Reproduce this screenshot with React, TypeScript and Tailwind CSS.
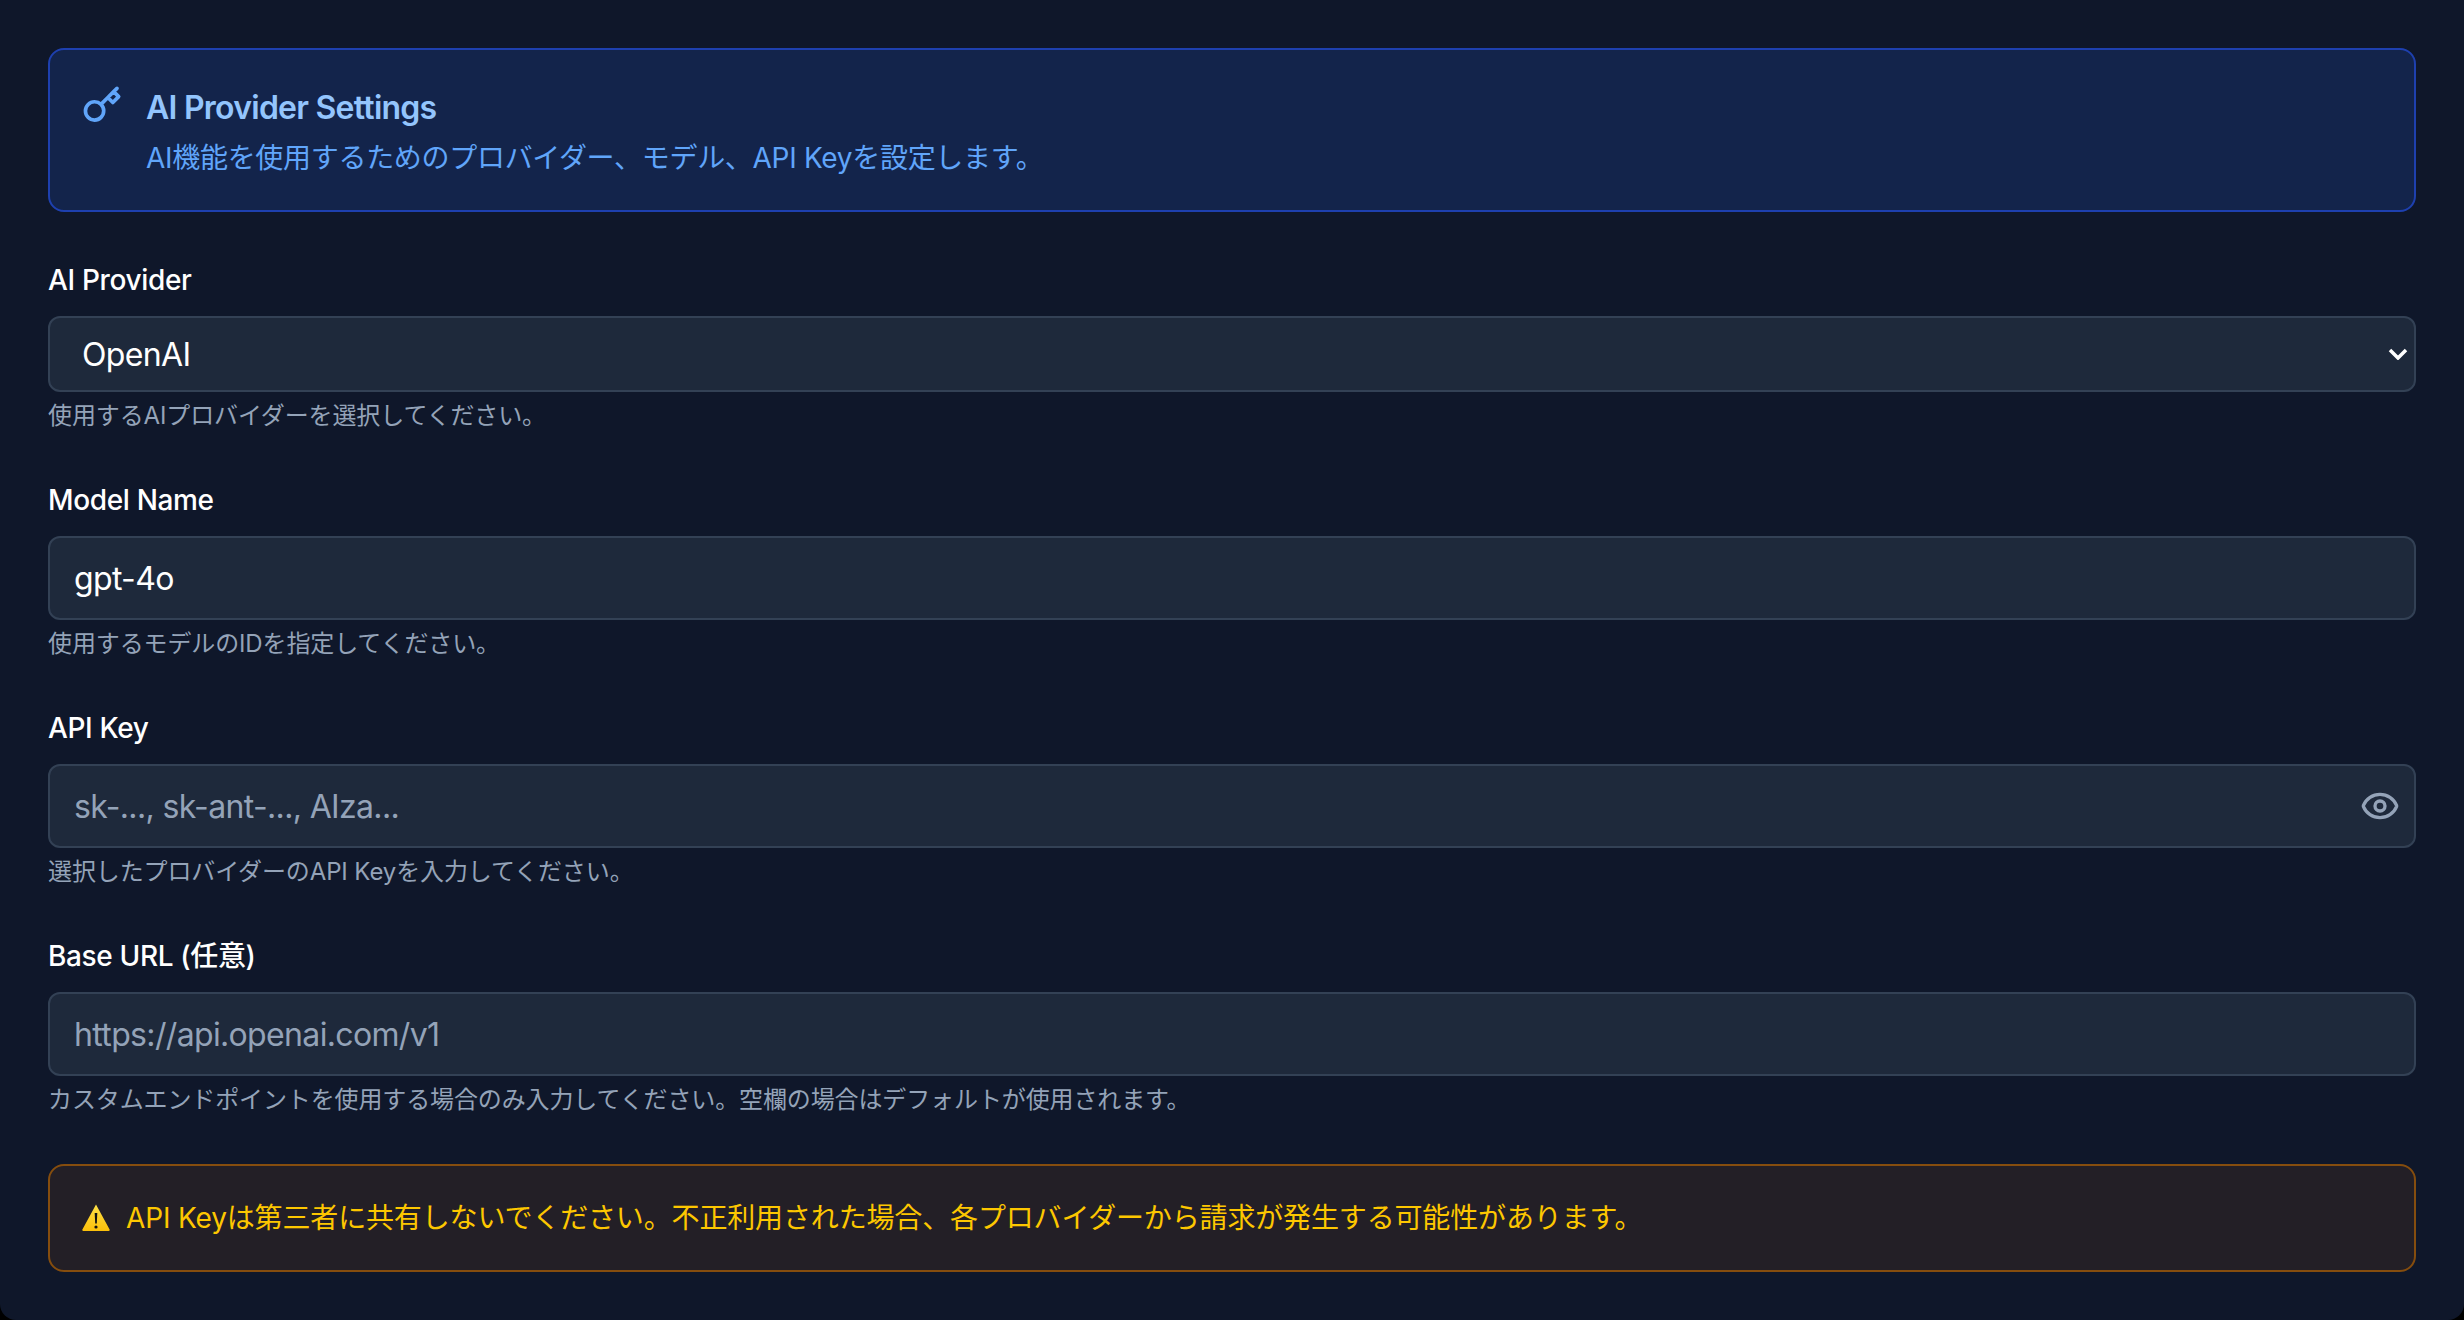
import React from "react";
import { Eye } from "lucide-react";

const FONT = "font-['Inter','Noto_Sans_CJK_JP',sans-serif]";

const Label = ({ children }: { children: React.ReactNode }) => (
  <label className="block mb-4 text-[28px] leading-10 font-medium text-white tracking-[-0.35px]">
    {children}
  </label>
);

const Hint = ({ children }: { children: React.ReactNode }) => (
  <p className="mt-2 text-2xl leading-8 text-[#94a3b8] tracking-[-0.12px]">
    {children}
  </p>
);

const inputClass =
  "block w-full h-[84px] px-6 rounded-xl bg-[#1e293b] border-2 border-[#334155] text-[32px] tracking-[-0.65px] text-white placeholder:text-[#94a3b8] outline-none";

export default function App() {
  return (
    <div className="bg-black">
      <div
        className={`${FONT} w-full min-h-[1320px] bg-[#0f172a] p-12 rounded-b-2xl antialiased`}
      >
        {/* Info banner */}
        <div className="flex gap-6 p-8 mb-12 rounded-2xl border-2 border-[#1e40af] bg-[#13244b]">
          <svg
            className="w-10 h-10 mt-[3px] shrink-0 text-[#60a5fa]"
            viewBox="0 0 24 24"
            fill="none"
            stroke="currentColor"
            strokeWidth="2.2"
            strokeLinecap="round"
            strokeLinejoin="round"
          >
            <path d="M21 2l-2 2m-7.61 7.61a5.5 5.5 0 1 1-7.778 7.778 5.5 5.5 0 0 1 7.777-7.777zm0 0L15.5 7.5m0 0l3 3L22 7l-3-3m-3.5 3.5L19 4" />
          </svg>
          <div>
            <h3 className="pt-1 text-[32px] leading-11 font-semibold text-[#93c5fd] tracking-[-0.75px]">
              AI Provider Settings
            </h3>
            <p className="mt-2 text-[28px] leading-10 text-[#60a5fa] tracking-[-0.3px]">
              AI機能を使用するためのプロバイダー、モデル、API Keyを設定します。
            </p>
          </div>
        </div>

        {/* Form fields */}
        <div className="flex flex-col gap-12">
          <div>
            <Label>AI Provider</Label>
            <div className="relative">
              <select className="block w-full h-[76px] pl-8 pr-16 pt-0.5 rounded-xl bg-[#1e293b] border-2 border-[#334155] text-[32px] tracking-[-0.65px] text-white appearance-none outline-none">
                <option>OpenAI</option>
                <option>Anthropic</option>
                <option>Google Gemini</option>
              </select>
              <svg
                className="absolute right-2 top-8 w-5 h-3 text-white pointer-events-none"
                viewBox="0 0 20 12"
                fill="none"
                stroke="currentColor"
                strokeWidth="3.5"
              >
                <path d="M2 2l8 8 8-8" />
              </svg>
            </div>
            <Hint>使用するAIプロバイダーを選択してください。</Hint>
          </div>

          <div>
            <Label>Model Name</Label>
            <input className={inputClass} defaultValue="gpt-4o" />
            <Hint>使用するモデルのIDを指定してください。</Hint>
          </div>

          <div>
            <Label>API Key</Label>
            <div className="relative">
              <input
                type="password"
                className={`${inputClass} pr-20`}
                placeholder="sk-..., sk-ant-..., AIza..."
              />
              <button className="absolute right-4 top-[22px] text-[#94a3b8]">
                <Eye size={40} />
              </button>
            </div>
            <Hint>選択したプロバイダーのAPI Keyを入力してください。</Hint>
          </div>

          <div>
            <Label>Base URL (任意)</Label>
            <input
              className={inputClass}
              placeholder="https://api.openai.com/v1"
            />
            <Hint>
              カスタムエンドポイントを使用する場合のみ入力してください。空欄の場合はデフォルトが使用されます。
            </Hint>
          </div>

          {/* Warning */}
          <div className="flex items-center gap-4 p-8 rounded-2xl border-2 border-[#854d0e] bg-[#231f26]">
            <svg className="w-7 h-7 shrink-0" viewBox="0 0 28 28">
              <defs>
                <linearGradient id="warn" x1="0" y1="0" x2="0" y2="1">
                  <stop offset="0" stopColor="#fde047" />
                  <stop offset="1" stopColor="#fbbf0a" />
                </linearGradient>
              </defs>
              <path
                d="M14 .5L27.6 25.5a1 1 0 0 1-1 1.5H1.4a1 1 0 0 1-1-1.5z"
                fill="url(#warn)"
              />
              <path d="M12.7 9h2.6l-.5 10.5h-1.6z" fill="#111" />
              <circle cx="14" cy="23" r="1.6" fill="#111" />
            </svg>
            <p className="text-[28px] leading-10 text-[#fdc700] tracking-[-0.15px]">
              API Keyは第三者に共有しないでください。不正利用された場合、各プロバイダーから請求が発生する可能性があります。
            </p>
          </div>
        </div>
      </div>
    </div>
  );
}
